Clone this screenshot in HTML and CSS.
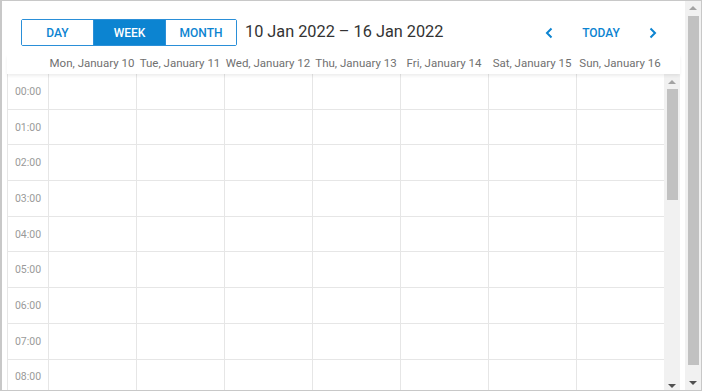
FILE: index.html
```html
<!DOCTYPE html>
<html lang="en">
<head>
    <meta charset="UTF-8">
    <meta name="viewport" content="width=device-width, initial-scale=1.0">
    <title>Scheduler - Week</title>
    <link rel="stylesheet" href="styles.css">
</head>
<body>
    <div class="frame">
        <div class="scheduler">
            <div class="toolbar">
                <div class="views">
                    <button class="view">Day</button>
                    <button class="view active">Week</button>
                    <button class="view">Month</button>
                </div>
                <div class="range">10 Jan 2022 &ndash; 16 Jan 2022</div>
                <div class="nav">
                    <button class="arrow" title="Previous">
                        <svg width="8" height="12" viewBox="0 0 8 12"><path d="M6.5 1.5 2 6l4.5 4.5" fill="none" stroke="#0c84d1" stroke-width="2"/></svg>
                    </button>
                    <button class="today">Today</button>
                    <button class="arrow" title="Next">
                        <svg width="8" height="12" viewBox="0 0 8 12"><path d="M1.5 1.5 6 6l-4.5 4.5" fill="none" stroke="#0c84d1" stroke-width="2"/></svg>
                    </button>
                </div>
            </div>

            <div class="days-head">
                <div class="corner"></div>
                <div class="day">Mon, January 10</div>
                <div class="day">Tue, January 11</div>
                <div class="day">Wed, January 12</div>
                <div class="day">Thu, January 13</div>
                <div class="day">Fri, January 14</div>
                <div class="day">Sat, January 15</div>
                <div class="day">Sun, January 16</div>
                <div class="gap"></div>
            </div>

            <div class="body">
                <div class="grid" id="grid"></div>
                <div class="vscroll inner">
                    <span class="up"></span>
                    <span class="thumb"></span>
                    <span class="down"></span>
                </div>
            </div>
        </div>
        <div class="vscroll outer">
            <span class="up"></span>
            <span class="thumb"></span>
            <span class="down"></span>
        </div>
    </div>

    <script>
        // build the hour rows
        const grid = document.getElementById("grid");
        for (let h = 0; h < 10; h++) {
            const row = document.createElement("div");
            row.className = "row";
            let html = '<div class="time">' + String(h).padStart(2, "0") + ':00</div>';
            for (let d = 0; d < 7; d++) {
                html += '<div class="cell"></div>';
            }
            row.innerHTML = html;
            grid.appendChild(row);
        }
    </script>
</body>
</html>
```

FILE: styles.css
```css
* {
    box-sizing: border-box;
}
body {
    margin: 0;
    font-family: Roboto, "Liberation Sans", sans-serif;
}
.frame {
    width: 702px;
    height: 391px;
    border: 1px solid #c8c8c8;
    border-left: 2px solid #c8c8c8;
    display: flex;
    overflow: hidden;
    background: #fff;
}
.scheduler {
    flex: 1;
    display: flex;
    flex-direction: column;
    padding: 0 5px 0 5px;
    min-width: 0;
}

/* toolbar */
.toolbar {
    display: flex;
    padding: 18px 13px 0 14px;
    height: 54px;
    align-items: flex-start;
}
.views {
    display: flex;
    border: 1px solid #2a8fd8;
    border-radius: 2px;
    height: 27px;
}
.view {
    border: 0;
    background: #fff;
    color: #0c84d1;
    font-family: inherit;
    font-size: 12px;
    font-weight: 500;
    text-transform: uppercase;
    width: 71px;
    padding: 0;
    cursor: pointer;
}
.view + .view {
    border-left: 1px solid #2a8fd8;
}
.view.active {
    background: #0c84d1;
    color: #fff;
    width: 72px;
}
.range {
    margin-left: 8px;
    font-size: 16.3px;
    color: #333;
    line-height: 26px;
}
.nav {
    margin-left: auto;
    display: flex;
    height: 27px;
    align-items: center;
}
.nav button {
    border: 0;
    background: none;
    cursor: pointer;
    font-family: inherit;
    padding: 0;
    height: 27px;
}
.arrow {
    width: 28px;
    display: flex;
    align-items: center;
    justify-content: center;
}
.today {
    width: 76px;
    font-size: 12px;
    font-weight: 500;
    color: #0c84d1;
    text-transform: uppercase;
}

/* day header */
.days-head {
    display: flex;
    height: 19px;
    position: relative;
    z-index: 1;
    box-shadow: 0 2px 3px rgba(0, 0, 0, 0.07);
    font-size: 11.5px;
    color: #707070;
    line-height: 17px;
}
.corner {
    width: 41px;
}
.day {
    flex: 1;
    text-align: center;
    white-space: nowrap;
}
.gap {
    width: 16px;
}

/* grid */
.body {
    flex: 1;
    display: flex;
    overflow: hidden;
}
.grid {
    flex: 1;
}
.row {
    display: flex;
    height: 35.7px;
    border-bottom: 1px solid #e6e6e6;
}
.time {
    width: 41px;
    border-left: 1px solid #e6e6e6;
    font-size: 10.5px;
    color: #9a9a9a;
    display: flex;
    align-items: center;
    justify-content: center;
}
.cell {
    flex: 1;
    border-left: 1px solid #e6e6e6;
}

/* fake scrollbars */
.vscroll {
    width: 16px;
    background: #f1f1f1;
    display: flex;
    flex-direction: column;
    align-items: center;
}
.vscroll .thumb {
    width: 11px;
    background: #c1c1c1;
}
.vscroll .up,
.vscroll .down {
    width: 0;
    height: 0;
    border-left: 4px solid transparent;
    border-right: 4px solid transparent;
}
.vscroll .up {
    border-bottom: 4px solid #a3a3a3;
}
.vscroll .down {
    border-top: 4px solid #505050;
    margin-top: auto;
}
.inner .up {
    margin: 6px 0 5px;
}
.inner .thumb {
    height: 111px;
}
.inner .down {
    margin-bottom: 2px;
}
.outer .up {
    margin: 5px 0 6px;
}
.outer .thumb {
    height: 349px;
}
.outer .down {
    margin-bottom: 5px;
}
```
